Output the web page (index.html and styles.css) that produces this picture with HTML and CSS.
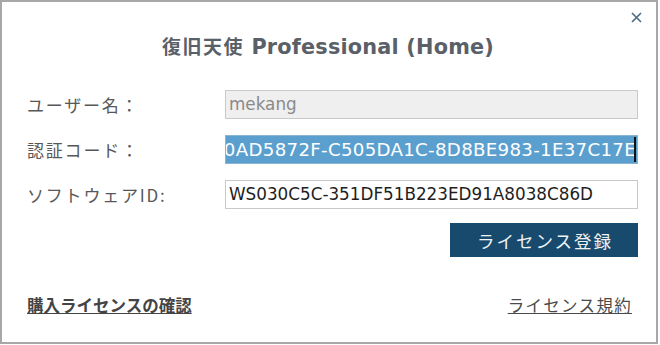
FILE: index.html
```html
<!DOCTYPE html>
<html lang="ja">
<head>
<meta charset="utf-8">
<title>復旧天使 Professional (Home)</title>
<link rel="stylesheet" href="styles.css">
</head>
<body>
<div class="dialog">
  <button class="close" aria-label="閉じる">
    <svg width="11" height="11" viewBox="0 0 11 11"><path d="M1 1L10 10M10 1L1 10" stroke="#4d6a85" stroke-width="1.6" fill="none"/></svg>
  </button>
  <h1 class="title"><span class="title-jp">復旧天使</span> Professional (Home)</h1>
  <div class="form">
    <div class="label">ユーザー名：</div>
    <div class="field field-disabled">mekang</div>
    <div class="label">認証コード：</div>
    <div class="field field-selected"><span class="sel">70AD5872F-C505DA1C-8D8BE983-1E37C17E</span><span class="caret"></span></div>
    <div class="label">ソフトウェアID:</div>
    <div class="field">WS030C5C-351DF51B223ED91A8038C86D</div>
  </div>
  <div class="actions">
    <button class="primary">ライセンス登録</button>
  </div>
  <div class="footer">
    <a class="link link-bold" href="#">購入ライセンスの確認</a>
    <a class="link link-wide" href="#">ライセンス規約</a>
  </div>
</div>
</body>
</html>
```
FILE: styles.css
```css
html, body {
  margin: 0;
  padding: 0;
  background: #ffffff;
}
body {
  font-family: "DejaVu Sans", "Noto Sans CJK JP", sans-serif;
  color: #555555;
}
.dialog {
  position: relative;
  box-sizing: border-box;
  width: 658px;
  height: 344px;
  border: 2px solid #a7a7a7;
  background: #ffffff;
  display: flex;
  flex-direction: column;
}
.close {
  position: absolute;
  top: 8px;
  right: 12px;
  width: 15px;
  height: 15px;
  padding: 0;
  border: 0;
  background: transparent;
  display: flex;
  align-items: center;
  justify-content: center;
}
.title {
  margin: 31px 0 0 0;
  height: 26px;
  line-height: 26px;
  font-size: 20.8px;
  font-weight: bold;
  text-align: center;
  color: #5a6068;
  padding-right: 2px;
  letter-spacing: 0.2px;
}
.title-jp {
  font-family: "Noto Sans CJK JP", sans-serif;
  font-size: 19px;
  letter-spacing: 1.5px;
}
.form {
  margin-top: 31px;
  padding: 0 18px 0 25px;
  display: grid;
  grid-template-columns: 198px 1fr;
  row-gap: 16px;
  align-items: center;
}
.label {
  font-family: "Noto Sans CJK JP", sans-serif;
  font-size: 17px;
  letter-spacing: 1.8px;
  color: #575757;
  line-height: 28px;
}
.field {
  box-sizing: border-box;
  height: 29px;
  border: 1px solid #c9c9c9;
  padding: 0 3px;
  font-size: 16.8px;
  line-height: 27px;
  color: #1e1e1e;
  white-space: nowrap;
  overflow: hidden;
  background: #ffffff;
}
.field-disabled {
  background: #efefef;
  color: #8a8a8a;
}
.field-selected {
  background: #5b9fcf;
  border-color: #8ab4d2;
  color: #ffffff;
  padding: 0 1px 0 0;
  display: flex;
  justify-content: flex-end;
  align-items: center;
}
.sel {
  flex: none;
  font-size: 18.2px;
  letter-spacing: 0.3px;
}
.caret {
  flex: none;
  width: 2px;
  height: 25px;
  background: #111111;
  margin-left: -2px;
}
.actions {
  margin-top: 14px;
  padding: 0 18px 0 25px;
  display: flex;
  justify-content: flex-end;
}
.primary {
  width: 188px;
  height: 34px;
  border: 0;
  background: #174a6c;
  color: #eef2f5;
  font-family: "Noto Sans CJK JP", sans-serif;
  font-size: 17.5px;
  letter-spacing: 2px;
  padding: 0 0 0 2px;
}
.footer {
  margin-top: 36px;
  padding: 0 24px 0 25px;
  display: flex;
  justify-content: space-between;
}
.link {
  font-family: "Noto Sans CJK JP", sans-serif;
  font-size: 16.5px;
  color: #4a4a4a;
  text-decoration: underline;
  line-height: 24px;
}
.link-bold {
  font-weight: bold;
  color: #444444;
}
.link-wide {
  letter-spacing: 1.3px;
}
```
